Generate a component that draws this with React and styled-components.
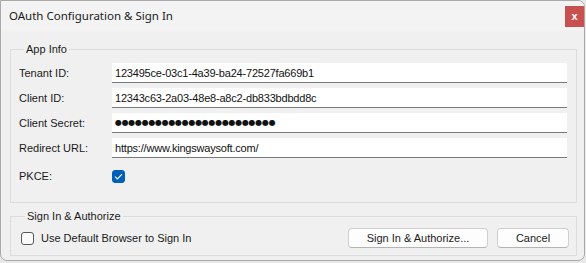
import React from 'react';
import styled, { createGlobalStyle } from 'styled-components';

const GlobalStyle = createGlobalStyle`
  html, body {
    margin: 0;
    padding: 0;
    background: #e8e8e8;
  }
  body {
    font-family: "Liberation Sans", Arial, sans-serif;
    font-size: 11px;
    color: #1a1a1a;
  }
`;

const fields = [
  { label: 'Tenant ID:', value: '123495ce-03c1-4a39-ba24-72527fa669b1' },
  { label: 'Client ID:', value: '12343c63-2a03-48e8-a8c2-db833bdbdd8c' },
  { label: 'Client Secret:', value: '●'.repeat(24), secret: true },
  { label: 'Redirect URL:', value: 'https://www.kingswaysoft.com/' },
];

function App() {
  return (
    <>
      <GlobalStyle />
      <Window>
        <TitleBar>
          <Title>OAuth Configuration &amp; Sign In</Title>
          <CloseButton>x</CloseButton>
        </TitleBar>
        <Body>
          <Group>
            <Legend>App Info</Legend>
            <Rows>
              {fields.map((f) => (
                <Row key={f.label}>
                  <Label>{f.label}</Label>
                  <TextBox $secret={f.secret}>{f.value}</TextBox>
                </Row>
              ))}
              <Row $tall>
                <Label>PKCE:</Label>
                <CheckBox $checked>
                  <svg width="9" height="7" viewBox="0 0 9 7">
                    <path d="M1 3.6 L3.4 6 L8 1.2" fill="none" stroke="#fff" strokeWidth="1.1" />
                  </svg>
                </CheckBox>
              </Row>
            </Rows>
          </Group>
          <Group $bottom>
            <Legend>Sign In &amp; Authorize</Legend>
            <ActionRow>
              <CheckLabel>
                <CheckBox />
                <span>Use Default Browser to Sign In</span>
              </CheckLabel>
              <Buttons>
                <Button $w={140}>Sign In &amp; Authorize...</Button>
                <Button $w={72}>Cancel</Button>
              </Buttons>
            </ActionRow>
          </Group>
        </Body>
      </Window>
    </>
  );
}

const Window = styled.div`
  width: 585px;
  height: 261px;
  box-sizing: border-box;
  border: 1px solid #a9a9a9;
  border-radius: 0 7px 7px 7px;
  background: #f0f0f0;
  display: flex;
  flex-direction: column;
  overflow: hidden;
`;

const TitleBar = styled.div`
  height: 30px;
  background: #f3f3f3;
  display: flex;
  align-items: center;
  justify-content: space-between;
  padding: 0 0 0 8px;
`;

const Title = styled.span`
  font-family: "Noto Sans", "Open Sans", sans-serif;
  font-size: 11.5px;
  color: #1b1b1b;
  margin-top: -1px;
`;

const CloseButton = styled.div`
  width: 19px;
  height: 21px;
  align-self: flex-start;
  margin-top: 5px;
  background: #c75050;
  color: #fff;
  font-weight: bold;
  font-size: 11px;
  display: flex;
  align-items: center;
  justify-content: center;
  line-height: 1;
`;

const Body = styled.div`
  flex: 1;
  display: flex;
  flex-direction: column;
  gap: 5px;
  padding: 10px 7px 0 9px;
`;

const Group = styled.fieldset`
  margin: 0;
  border: 1px solid #dcdcdc;
  padding: ${(p) => (p.$bottom ? '4px 7px 7px 9px' : '6px 9px 16px 8px')};
  min-width: 0;
`;

const Legend = styled.legend`
  padding: 0 2px;
  margin-left: 5px;
  font-size: 11px;
  line-height: 16px;
  color: #1b1b1b;
`;

const Rows = styled.div`
  display: flex;
  flex-direction: column;
  gap: 5px;
`;

const Row = styled.div`
  display: flex;
  align-items: center;
  height: 20px;
  margin-top: ${(p) => (p.$tall ? '3px' : '0')};
`;

const Label = styled.span`
  width: 93px;
  flex-shrink: 0;
`;

const TextBox = styled.div`
  flex: 1;
  height: 20px;
  box-sizing: border-box;
  background: #fff;
  border-bottom: 1px solid #7a7a7a;
  padding: 0 3px;
  display: flex;
  align-items: center;
  font-family: ${(p) => (p.$secret ? '"DejaVu Sans", sans-serif' : 'inherit')};
  font-size: ${(p) => (p.$secret ? '8px' : '11px')};
  letter-spacing: ${(p) => (p.$secret ? '-0.3px' : '-0.2px')};
  color: #111;
  white-space: nowrap;
  overflow: hidden;
`;

const CheckBox = styled.span`
  width: 13px;
  height: 13px;
  box-sizing: border-box;
  border-radius: 3px;
  border: 1px solid ${(p) => (p.$checked ? '#005fb8' : '#5a5a5a')};
  background: ${(p) => (p.$checked ? '#005fb8' : '#fafafa')};
  display: inline-flex;
  align-items: center;
  justify-content: center;
  flex-shrink: 0;
`;

const ActionRow = styled.div`
  display: flex;
  align-items: center;
  justify-content: space-between;
  height: 20px;
`;

const CheckLabel = styled.label`
  display: flex;
  align-items: center;
  gap: 7px;
  padding-left: 1px;
`;

const Buttons = styled.div`
  display: flex;
  gap: 9px;
`;

const Button = styled.button`
  width: ${(p) => p.$w}px;
  height: 20px;
  box-sizing: border-box;
  border: 1px solid #cfcfcf;
  border-bottom-color: #b4b4b4;
  border-radius: 4px;
  background: #fdfdfd;
  font-family: inherit;
  font-size: 11px;
  color: #1b1b1b;
  padding: 0;
`;

export default App;
